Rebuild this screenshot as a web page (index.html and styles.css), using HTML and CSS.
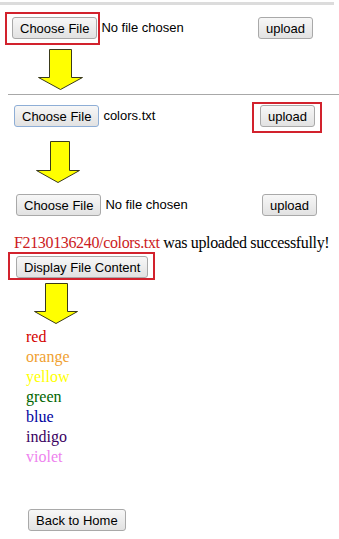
FILE: index.html
```html
<!DOCTYPE html>
<html lang="en">
<head>
  <meta charset="UTF-8" />
  <title>Upload File</title>
  <link rel="stylesheet" href="styles.css">
</head>
<body>
  <div class="topbar"></div>

  <!-- step 1 -->
  <div class="row row--one">
    <div class="file">
      <span class="frame frame--choose"><button class="btn">Choose File</button></span>
      <span class="file__name">No file chosen</span>
    </div>
    <button class="btn btn--upload">upload</button>
  </div>
  <svg class="arrow arrow--one" width="45" height="41" viewBox="0 0 45 41">
    <polygon points="11.5,0.5 33.5,0.5 33.5,28.5 44.5,28.5 22.5,40.5 0.5,28.5 11.5,28.5" />
  </svg>
  <div class="line"></div>

  <!-- step 2 -->
  <div class="row row--two">
    <div class="file file--two">
      <button class="btn btn--focus">Choose File</button>
      <span class="file__name">colors.txt</span>
    </div>
    <span class="frame frame--upload"><button class="btn">upload</button></span>
  </div>
  <svg class="arrow arrow--two" width="44" height="42" viewBox="0 0 44 42">
    <polygon points="14.5,0.5 33.5,0.5 33.5,29.5 43.5,29.5 22,41.5 0.5,29.5 14.5,29.5" />
  </svg>

  <!-- step 3 -->
  <div class="row row--three">
    <div class="file file--three">
      <button class="btn">Choose File</button>
      <span class="file__name">No file chosen</span>
    </div>
    <button class="btn">upload</button>
  </div>
  <p class="message"><span class="message__path">F2130136240/colors.txt</span> was uploaded successfully!</p>
  <div class="frame frame--display"><button class="btn">Display File Content</button></div>
  <svg class="arrow arrow--three" width="44" height="41" viewBox="0 0 44 41">
    <polygon points="11.5,0.5 33.5,0.5 33.5,28.5 43.5,28.5 22,40.5 0.5,28.5 11.5,28.5" />
  </svg>

  <ul class="colors">
    <li class="red">red</li>
    <li class="orange">orange</li>
    <li class="yellow">yellow</li>
    <li class="green">green</li>
    <li class="blue">blue</li>
    <li class="indigo">indigo</li>
    <li class="violet">violet</li>
  </ul>

  <button class="btn btn--home">Back to Home</button>
</body>
</html>
```

FILE: styles.css
```css
body {
  margin: 0;
  font-family: 'Liberation Sans', Arial, sans-serif;
  font-size: 13px;
  color: #000;
  background-color: #fff;
}

.topbar {
  width: 334px;
  height: 3px;
  margin-top: 2px;
  background-color: #dcdcdc;
}

.btn {
  display: block;
  box-sizing: border-box;
  height: 22px;
  padding: 0 7px;
  font-family: 'Liberation Sans', Arial, sans-serif;
  font-size: 13px;
  color: #000;
  background: linear-gradient(#f7f7f7, #e2e2e2);
  border: 1px solid #a9a9a9;
  border-radius: 3px;
}

.btn--focus {
  border-color: #8eaed6;
}

.frame {
  display: inline-block;
  border: 2px solid #d2222d;
}

.frame--choose {
  padding: 3px 1px 4px 5px;
}

.frame--upload {
  padding: 1px 5px 4px 6px;
}

.frame--display {
  display: block;
  width: fit-content;
  margin-left: 8px;
  padding: 2px 5px 0 6px;
}

.row {
  display: flex;
  align-items: flex-start;
}

.file {
  display: flex;
  align-items: flex-start;
}

.file__name {
  line-height: 22px;
  margin-left: 4px;
}

.row--one {
  margin-top: 7px;
  padding-left: 5px;
}

.row--one .file {
  width: 253px;
}

.row--one .file__name {
  margin-top: 5px;
  margin-left: 1px;
}

.btn--upload {
  margin-top: 5px;
}

.line {
  height: 1px;
  margin: 4px 0 0 8px;
  background-color: #a8a8a8;
}

.row--two {
  margin-top: 7px;
  padding-left: 14px;
}

.file--two {
  width: 238px;
  margin-top: 3px;
}

.row--three {
  margin-top: 11px;
  padding-left: 16px;
}

.file--three {
  width: 246px;
}

.arrow {
  display: block;
}

.arrow polygon {
  fill: #ffff00;
  stroke: #3a3a1a;
  stroke-width: 1;
}

.arrow--one {
  margin: 4px 0 0 38px;
}

.arrow--two {
  margin: 8px 0 0 36px;
}

.arrow--three {
  margin: 3px 0 0 34px;
}

.message {
  margin: 18px 0 0 14px;
  font-family: 'Liberation Serif', 'Times New Roman', serif;
  font-size: 16px;
  line-height: 18px;
  white-space: nowrap;
  letter-spacing: -0.35px;
}

.message__path {
  color: #cc1a22;
}

.colors {
  list-style: none;
  margin: 3px 0 0 26px;
  padding: 0;
  font-family: 'Liberation Serif', 'Times New Roman', serif;
  font-size: 16px;
  line-height: 20px;
}

.red { color: #d40000; }
.orange { color: #f0a030; }
.yellow { color: #ffff00; }
.green { color: #006400; }
.blue { color: #0000a0; }
.indigo { color: #3a005f; }
.violet { color: #ee82ee; }

.btn--home {
  margin: 42px 0 0 28px;
}
```
